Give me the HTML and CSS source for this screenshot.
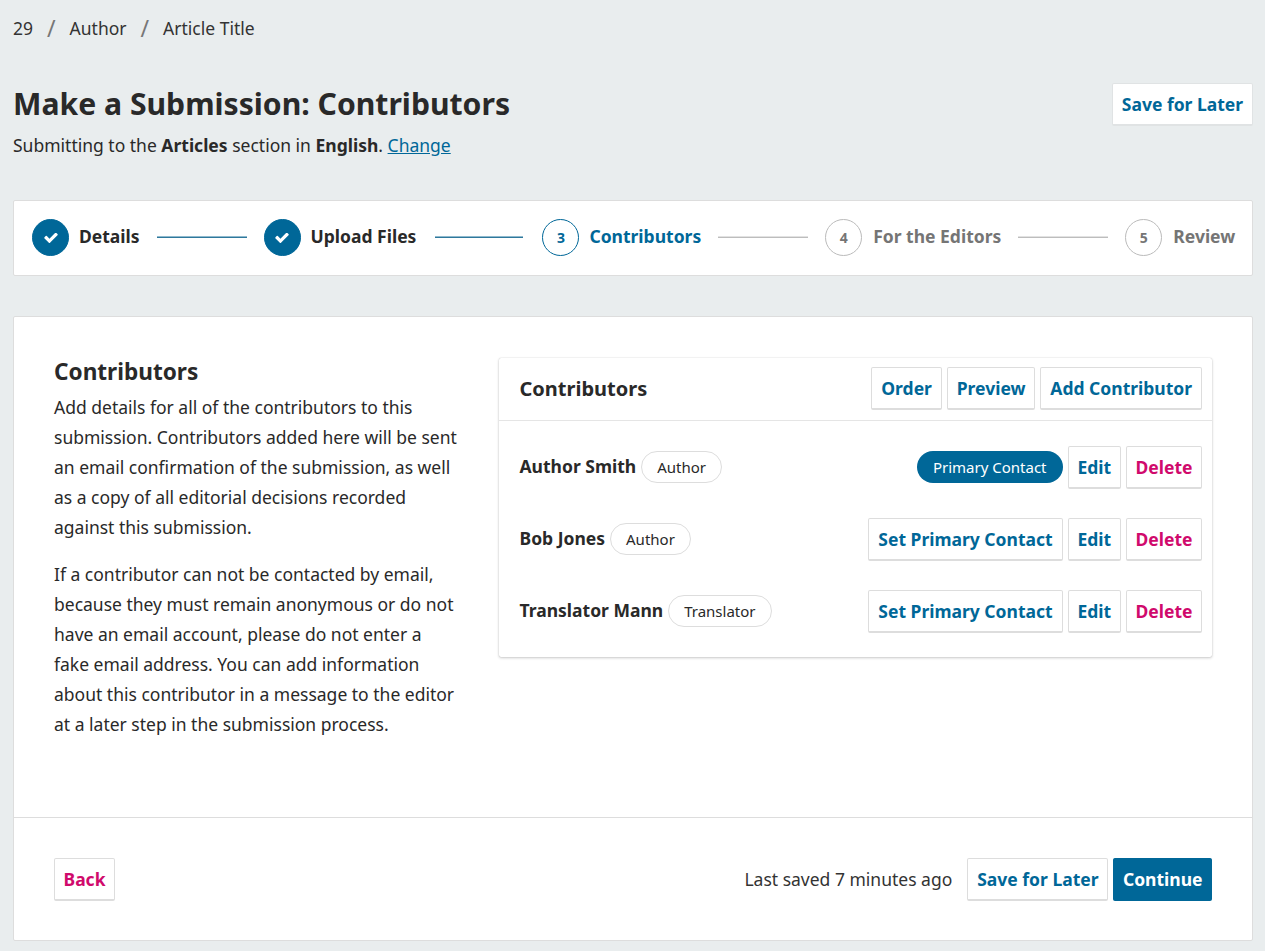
FILE: index.html
```html
<!DOCTYPE html>
<html lang="en">
<head>
<meta charset="utf-8">
<title>Make a Submission: Contributors</title>
<link rel="stylesheet" href="styles.css">
</head>
<body>
<div class="page">
  <nav class="crumbs"><span>29</span><span class="sep">/</span><span>Author</span><span class="sep">/</span><span>Article Title</span></nav>
  <header class="head">
    <div>
      <h1>Make a Submission: Contributors</h1>
      <p class="sub">Submitting to the <b>Articles</b> section in <b>English</b>. <a href="#">Change</a></p>
    </div>
    <button class="btn head-btn">Save for Later</button>
  </header>
  <ol class="steps">
    <li class="step done"><span class="dot"><svg viewBox="121 370 1550 1152" width="14" height="10"><path fill="#fff" d="M1671 566q0 40-28 68l-724 724-136 136q-28 28-68 28t-68-28l-136-136-362-362q-28-28-28-68t28-68l136-136q28-28 68-28t68 28l294 295 656-657q28-28 68-28t68 28l136 136q28 28 28 68z"/></svg></span><span class="lbl">Details</span></li>
    <li class="line on"></li>
    <li class="step done"><span class="dot"><svg viewBox="121 370 1550 1152" width="14" height="10"><path fill="#fff" d="M1671 566q0 40-28 68l-724 724-136 136q-28 28-68 28t-68-28l-136-136-362-362q-28-28-28-68t28-68l136-136q28-28 68-28t68 28l294 295 656-657q28-28 68-28t68 28l136 136q28 28 28 68z"/></svg></span><span class="lbl">Upload Files</span></li>
    <li class="line on short"></li>
    <li class="step cur"><span class="dot">3</span><span class="lbl">Contributors</span></li>
    <li class="line"></li>
    <li class="step far"><span class="dot">4</span><span class="lbl">For the Editors</span></li>
    <li class="line"></li>
    <li class="step far"><span class="dot">5</span><span class="lbl">Review</span></li>
  </ol>
  <main class="card">
    <div class="body">
      <section class="desc">
        <h2>Contributors</h2>
        <p>Add details for all of the contributors to this submission. Contributors added here will be sent an email confirmation of the submission, as well as a copy of all editorial decisions recorded against this submission.</p>
        <p>If a contributor can not be contacted by email, because they must remain anonymous or do not have an email account, please do not enter a fake email address. You can add information about this contributor in a message to the editor at a later step in the submission process.</p>
      </section>
      <section class="panel">
        <div class="panel-head">
          <h3>Contributors</h3>
          <div class="acts"><button class="btn">Order</button><button class="btn">Preview</button><button class="btn">Add Contributor</button></div>
        </div>
        <ul class="rows">
          <li class="row"><span class="name">Author Smith</span><span class="tag">Author</span><div class="acts"><span class="pill">Primary Contact</span><button class="btn">Edit</button><button class="btn del">Delete</button></div></li>
          <li class="row"><span class="name">Bob Jones</span><span class="tag">Author</span><div class="acts"><button class="btn">Set Primary Contact</button><button class="btn">Edit</button><button class="btn del">Delete</button></div></li>
          <li class="row"><span class="name">Translator Mann</span><span class="tag">Translator</span><div class="acts"><button class="btn">Set Primary Contact</button><button class="btn">Edit</button><button class="btn del">Delete</button></div></li>
        </ul>
      </section>
    </div>
    <footer class="foot">
      <button class="btn del">Back</button>
      <div class="foot-r"><span class="saved">Last saved 7 minutes ago</span><button class="btn">Save for Later</button><button class="btn primary">Continue</button></div>
    </footer>
  </main>
</div>
</body>
</html>
```

FILE: styles.css
```css
* { box-sizing: border-box; }
html, body { margin: 0; }
body {
  background: #e9edee;
  color: #292929;
  font-family: "Noto Sans", sans-serif;
  font-size: 17.5px;
  line-height: 30px;
  height: 951px;
  overflow: hidden;
}
.page { padding: 13px 12px 0 13px; }
.crumbs { display: flex; gap: 14px; height: 30px; color: #333; }
.sep { color: #777; font-size: 23px; }
.head { display: flex; justify-content: space-between; align-items: flex-start; margin-top: 40px; height: 117px; }
h1 { margin: 0; font-size: 30.15px; line-height: 42px; font-weight: 700; }
.sub { margin: 7px 0 0; line-height: 26px; }
.sub a { color: #006798; }
.btn {
  font: 700 17.5px/30px "Noto Sans", sans-serif;
  color: #006798;
  background: #fff;
  border: 1px solid #ddd;
  border-bottom-width: 2px;
  border-radius: 2px;
  padding: 5px 8.92px;
  height: 43px;
  white-space: nowrap;
}
.del { color: #d00a6c; padding: 5px 8.5px; }
.head-btn { border-color: #e0e3e4; }
.primary { background: #006798; border-color: #006798; color: #fff; padding: 5px 8.5px; }
.steps {
  list-style: none; margin: 0; padding: 0 0 1px 18px;
  height: 76px;
  background: #fff;
  border: 1px solid #ddd;
  border-radius: 2px;
  display: flex; align-items: center;
}
.step { display: flex; align-items: center; gap: 10px; font-weight: 700; color: #757575; }
.far { gap: 11px; }
.lbl { padding-bottom: 3px; }
.dot {
  width: 37px; height: 37px; border-radius: 50%;
  border: 1px solid #bbb; background: #fff;
  display: flex; align-items: center; justify-content: center;
  font-size: 14px; line-height: 1;
}
.done { color: #292929; }
.done .dot { background: #006798; border-color: #006798; }
.cur { color: #006798; }
.cur .dot { border-color: #006798; }
.line { width: 90px; height: 2px; margin: -1px 17px 0; background: linear-gradient(#e2e2e2 50%, #bdbdbd 50%); }
.line.on { background: linear-gradient(#8fb9cd 50%, #2f789c 50%); }
.line.short { width: 88px; margin-left: 19px; margin-right: 19px; }
.card {
  margin-top: 40px;
  height: 625px;
  background: #fff;
  border: 1px solid #ddd;
  border-radius: 2px;
  display: flex; flex-direction: column;
}
.body { flex: 1; display: flex; padding: 41px 40px 0; gap: 40px; }
.desc { width: 405px; flex: none; }
h2 { margin: -1px 0 5px; font-size: 22.6px; line-height: 30px; font-weight: 700; }
.desc p { margin: 0 0 17px; }
.panel {
  flex: 1; height: 299px;
  border-radius: 2px;
  box-shadow: 0 0 1px rgba(0,0,0,.25), 0 1px 3px rgba(0,0,0,.2);
}
.panel-head { display: flex; justify-content: space-between; align-items: center; height: 63px; padding: 0 10px 1px 20.5px; border-bottom: 1px solid #e5e5e5; }
h3 { margin: 0; font-size: 20px; font-weight: 700; }
.acts { display: flex; gap: 5px; margin-left: auto; align-items: center; }
.rows { list-style: none; margin: 0; padding: 10px 10px 0 20.5px; }
.row { display: flex; align-items: center; height: 72px; }
.name { font-weight: 700; padding-bottom: 2px; }
.tag {
  margin-left: 5px; padding: 0 15px; height: 32px; line-height: 30px;
  font-size: 15px;
  border: 1px solid #ddd; border-radius: 16px;
}
.pill {
  background: #006798; color: #fff; font-size: 15px; line-height: 32px; height: 32px;
  padding: 0 16px; border-radius: 16px;
}
.foot { height: 123px; border-top: 1px solid #ddd; display: flex; justify-content: space-between; align-items: center; padding: 0 40px; }
.foot-r { display: flex; align-items: center; gap: 5px; }
.saved { margin-right: 10px; color: #333; }
```
